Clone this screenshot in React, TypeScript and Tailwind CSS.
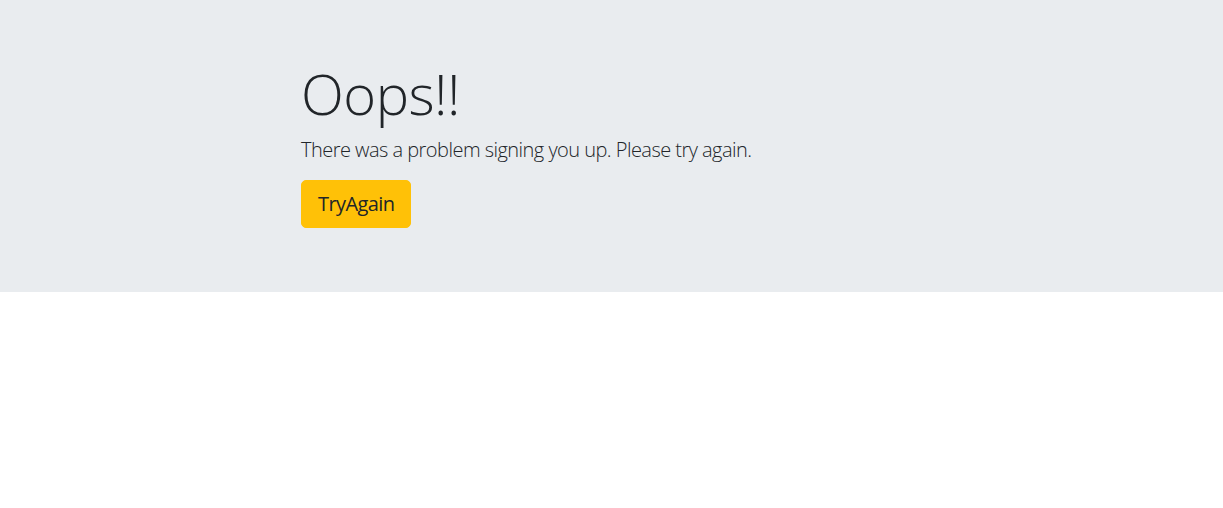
import React from "react";

export default function App() {
  return (
    <div className="min-h-[508px] bg-white text-[#212529]" style={{ fontFamily: '"Open Sans", "Noto Sans", sans-serif' }}>
      <div className="bg-[#e9ecef] h-[292px] pl-[301px] pt-[60px] box-border">
        <h1 className="text-[56px] leading-[1.2] font-light m-0 mb-2 tracking-[-0.5px]">Oops!!</h1>
        <p className="text-[20px] leading-[30px] font-light m-0 mb-[15px] tracking-[-0.53px]">
          There was a problem signing you up. Please try again.
        </p>
        <button className="bg-[#ffc107] text-[#212529] text-[20px] leading-[30px] px-4 py-2 h-[48px] rounded-[5px] border border-[#ffc107] tracking-[-0.6px]">
          TryAgain
        </button>
      </div>
    </div>
  );
}
